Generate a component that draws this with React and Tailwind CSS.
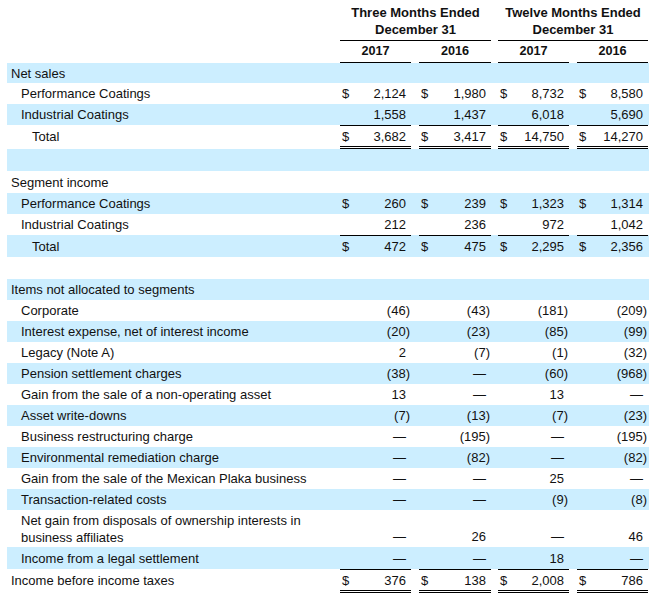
import React from "react";

const CELL_W = ["w-[71px]", "w-[72px]", "w-[71px]", "w-[71px]"];
const GAP_W = ["w-[8px]", "w-[7px]", "w-[8px]"];

function Val({ v }) {
  if (v.startsWith("(")) {
    return (
      <span>
        {v.slice(0, -1)}
        <span className="-mr-[4px]">)</span>
      </span>
    );
  }
  return <span>{v}</span>;
}

function Row({
  label,
  indent = "pl-[14px]",
  bg = "",
  h = "h-[21px]",
  vals = null,
  dollar = false,
  top = false,
  dbl = false,
  tall = false,
}) {
  const cellBorder = `${top ? "border-t border-black" : ""} ${
    dbl ? "border-b-[3px] border-double border-black" : ""
  }`;
  return (
    <div className={`flex ${h} ${bg}`}>
      <div
        className={`w-[333px] flex items-center ${indent} ${
          top ? "pt-[1px]" : ""
        } ${dbl ? "pb-[3px]" : ""} leading-[17px]`}
      >
        {label}
      </div>
      {[0, 1, 2, 3].map((i) => (
        <React.Fragment key={i}>
          {i > 0 && <div className={GAP_W[i - 1]} />}
          <div
            className={`${CELL_W[i]} ${cellBorder} flex ${
              tall ? "items-end pb-[2px]" : "items-center"
            } justify-between pl-[2px] pr-[5px] leading-[17px]`}
          >
            <span>{dollar && vals ? "$" : ""}</span>
            {vals ? <Val v={vals[i]} /> : <span />}
          </div>
        </React.Fragment>
      ))}
      <div className="w-[1px]" />
    </div>
  );
}

const BLUE = "bg-[#cceeff]";

export default function App() {
  const items = [
    ["Corporate", ["(46)", "(43)", "(181)", "(209)"]],
    ["Interest expense, net of interest income", ["(20)", "(23)", "(85)", "(99)"]],
    ["Legacy (Note A)", ["2", "(7)", "(1)", "(32)"]],
    ["Pension settlement charges", ["(38)", "—", "(60)", "(968)"]],
    ["Gain from the sale of a non-operating asset", ["13", "—", "13", "—"]],
    ["Asset write-downs", ["(7)", "(13)", "(7)", "(23)"]],
    ["Business restructuring charge", ["—", "(195)", "—", "(195)"]],
    ["Environmental remediation charge", ["—", "(82)", "—", "(82)"]],
    ["Gain from the sale of the Mexican Plaka business", ["—", "—", "25", "—"]],
    ["Transaction-related costs", ["—", "—", "(9)", "(8)"]],
  ];
  return (
    <div
      className="bg-white w-[665px] h-[601px] text-[#111] text-[13px]"
      style={{ fontFamily: '"Liberation Sans", Arial, sans-serif' }}
    >
      <div className="ml-[7px] w-[642px]">
        {/* Header */}
        <div className="flex h-[41px] font-bold">
          <div className="w-[333px]" />
          <div className="w-[151px] border-b border-black flex items-end justify-center text-center pb-[2px] leading-[17px]">
            <div>
              Three Months Ended
              <br />
              December 31
            </div>
          </div>
          <div className="w-[7px]" />
          <div className="w-[150px] border-b border-black flex items-end justify-center text-center pb-[2px] leading-[17px]">
            <div>
              Twelve Months Ended
              <br />
              December 31
            </div>
          </div>
          <div className="w-[1px]" />
        </div>
        {/* Years */}
        <div className="flex h-[22px] font-bold">
          <div className="w-[333px]" />
          {["2017", "2016", "2017", "2016"].map((y, i) => (
            <React.Fragment key={i}>
              {i > 0 && <div className={GAP_W[i - 1]} />}
              <div
                className={`${CELL_W[i]} border-b border-black flex items-center justify-center pt-[1px] text-[12.7px]`}
              >
                {y}
              </div>
            </React.Fragment>
          ))}
          <div className="w-[1px]" />
        </div>

        <Row label="Net sales" indent="pl-[4px]" bg={BLUE} h="h-[20px]" />
        <Row
          label="Performance Coatings"
          vals={["2,124", "1,980", "8,732", "8,580"]}
          dollar
        />
        <Row
          label="Industrial Coatings"
          bg={BLUE}
          vals={["1,558", "1,437", "6,018", "5,690"]}
        />
        <Row
          label="Total"
          indent="pl-[25px]"
          h="h-[24px]"
          vals={["3,682", "3,417", "14,750", "14,270"]}
          dollar
          top
          dbl
        />
        <Row label="" bg={BLUE} h="h-[22px]" />
        <Row label="Segment income" indent="pl-[4px]" h="h-[22px]" />
        <Row
          label="Performance Coatings"
          bg={BLUE}
          vals={["260", "239", "1,323", "1,314"]}
          dollar
        />
        <Row
          label="Industrial Coatings"
          vals={["212", "236", "972", "1,042"]}
        />
        <Row
          label="Total"
          indent="pl-[25px]"
          bg={BLUE}
          h="h-[22px]"
          vals={["472", "475", "2,295", "2,356"]}
          dollar
          top
        />
        <Row label="" h="h-[22px]" />
        <Row label="Items not allocated to segments" indent="pl-[4px]" bg={BLUE} />
        {items.map(([label, vals], i) => (
          <Row key={label} label={label} vals={vals} bg={i % 2 === 1 ? BLUE : ""} />
        ))}
        <Row
          label={
            <span>
              Net gain from disposals of ownership interests in
              <br />
              business affiliates
            </span>
          }
          h="h-[37px]"
          vals={["—", "26", "—", "46"]}
          tall
        />
        <Row
          label="Income from a legal settlement"
          bg={BLUE}
          h="h-[22px]"
          vals={["—", "—", "18", "—"]}
        />
        <Row
          label="Income before income taxes"
          indent="pl-[4px]"
          h="h-[24px]"
          vals={["376", "138", "2,008", "786"]}
          dollar
          top
          dbl
        />
      </div>
    </div>
  );
}
